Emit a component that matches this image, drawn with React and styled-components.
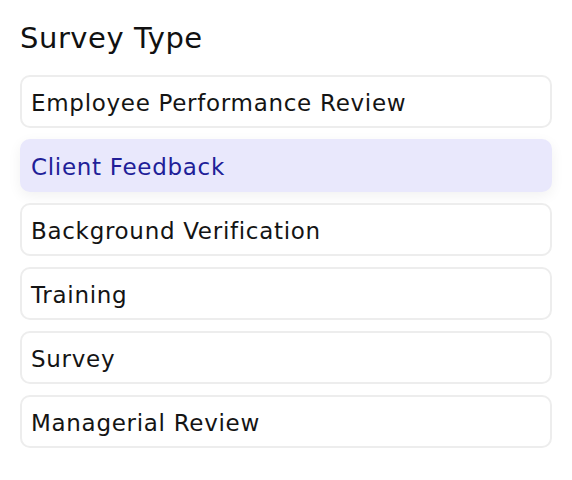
import React, { useState } from 'react';
import styled, { createGlobalStyle } from 'styled-components';

const GlobalStyle = createGlobalStyle`
  body {
    margin: 0;
    background: #ffffff;
    font-family: "DejaVu Sans", "Open Sans", sans-serif;
  }
`;

const Panel = styled.div`
  padding: 18px 20px 20px;
  display: flex;
  flex-direction: column;
`;

const Title = styled.h2`
  margin: 0 0 16px;
  font-size: 29px;
  font-weight: 400;
  color: #111111;
  line-height: 41px;
  letter-spacing: 0.55px;
`;

const List = styled.div`
  display: flex;
  flex-direction: column;
  gap: 11px;
`;

const Option = styled.div`
  box-sizing: border-box;
  height: 53px;
  display: flex;
  align-items: center;
  padding: 3px 9px 0;
  border-radius: 10px;
  border: 2px solid ${({ active }) => (active ? '#e9e8fc' : '#ededed')};
  background: ${({ active }) => (active ? '#e9e8fc' : '#ffffff')};
  color: ${({ active }) => (active ? '#211e98' : '#141414')};
  box-shadow: ${({ active }) => (active ? '0 4px 14px rgba(0, 0, 0, 0.06)' : 'none')};
  font-size: 23px;
  letter-spacing: 0.7px;
  cursor: pointer;
`;

const types = [
  'Employee Performance Review',
  'Client Feedback',
  'Background Verification',
  'Training',
  'Survey',
  'Managerial Review',
];

export default function App() {
  const [active, setActive] = useState(types[1]);
  return (
    <>
      <GlobalStyle />
      <Panel>
        <Title>Survey Type</Title>
        <List>
          {types.map(type => (
            <Option key={type} active={active === type} onClick={() => setActive(type)}>
              {type}
            </Option>
          ))}
        </List>
      </Panel>
    </>
  );
}
